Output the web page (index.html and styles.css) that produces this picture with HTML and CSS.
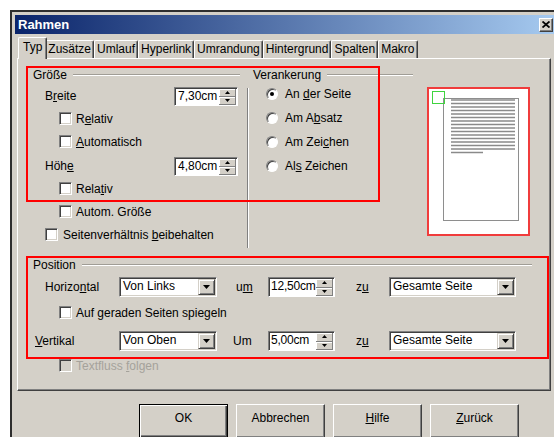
FILE: index.html
```html
<!DOCTYPE html>
<html lang="de">
<head>
<meta charset="utf-8">
<title>Rahmen</title>
<link rel="stylesheet" href="styles.css">
</head>
<body>
<div class="window">
  <div class="titlebar">
    <span class="title">Rahmen</span>
    <span class="close"><svg width="8" height="7" viewBox="0 0 8 7"><path d="M0.5 0.5L7.5 6.5M7.5 0.5L0.5 6.5" stroke="#000" stroke-width="1.8"/></svg></span>
  </div>

  <div class="tabs">
    <span class="tab active">Typ</span>
    <span class="tab">Zusätze</span>
    <span class="tab">Umlauf</span>
    <span class="tab">Hyperlink</span>
    <span class="tab">Umrandung</span>
    <span class="tab">Hintergrund</span>
    <span class="tab">Spalten</span>
    <span class="tab">Makro</span>
  </div>

  <div class="page">
    <div class="top">
      <div class="size">
        <div class="legend"><span>Größe</span></div>
        <div class="field-row">
          <span>B<u>r</u>eite</span>
          <span class="spin"><span class="val">7,30cm</span><span class="arrows"><i><svg width="5" height="3"><path d="M2.5 0L5 3H0z"/></svg></i><i><svg width="5" height="3"><path d="M0 0h5L2.5 3z"/></svg></i></span></span>
        </div>
        <div class="check-row mt1"><span class="cb"></span><span>R<u>e</u>lativ</span></div>
        <div class="check-row"><span class="cb"></span><span><u>A</u>utomatisch</span></div>
        <div class="field-row mt3">
          <span>Höh<u>e</u></span>
          <span class="spin"><span class="val">4,80cm</span><span class="arrows"><i><svg width="5" height="3"><path d="M2.5 0L5 3H0z"/></svg></i><i><svg width="5" height="3"><path d="M0 0h5L2.5 3z"/></svg></i></span></span>
        </div>
        <div class="check-row mt1"><span class="cb"></span><span>Rela<u>t</u>iv</span></div>
        <div class="check-row"><span class="cb"></span><span>Autom. Größe</span></div>
        <div class="check-row outer"><span class="cb"></span><span>Seitenverhältnis <u>b</u>eibehalten</span></div>
      </div>

      <div class="sep"></div>

      <div class="anchor">
        <div class="legend"><span>Verankerung</span></div>
        <div class="radio-row"><span class="radio on"></span><span>An <u>d</u>er Seite</span></div>
        <div class="radio-row"><span class="radio"></span><span>Am A<u>b</u>satz</span></div>
        <div class="radio-row"><span class="radio"></span><span>Am Zei<u>c</u>hen</span></div>
        <div class="radio-row"><span class="radio"></span><span>Al<u>s</u> Zeichen</span></div>
      </div>

      <div class="preview">
        <svg width="99" height="145" viewBox="0 0 99 145">
          <rect x="14.5" y="9.5" width="75" height="122" fill="#fff" stroke="#8e8e8e"/>
          <path d="M22 11H86M22 14.5H86M22 18H86M22 21.5H86M22 25H86M22 28.5H86M22 32H86M22 35.5H86M22 39H86M22 42.5H86M22 46H86M22 49.5H86M22 53H86M22 56.5H86M22 60H86M22 63.5H54" stroke="#8a8a8a" stroke-width="1.6" fill="none"/>
          <rect x="3.5" y="2.5" width="12" height="12" fill="none" stroke="#3fd43f"/>
        </svg>
      </div>
    </div>

    <div class="position">
      <div class="legend"><span>Position</span></div>
      <div class="pos-row">
        <span class="lbl-h">Horizo<u>n</u>tal</span>
        <span class="select"><span class="val">Von Links</span><span class="drop"><svg width="7" height="4"><path d="M0 0h7L3.5 4z"/></svg></span></span>
        <span class="lbl-um">u<u>m</u></span>
        <span class="spin wide"><span class="val">12,50cm</span><span class="arrows"><i><svg width="5" height="3"><path d="M2.5 0L5 3H0z"/></svg></i><i><svg width="5" height="3"><path d="M0 0h5L2.5 3z"/></svg></i></span></span>
        <span class="lbl-zu">z<u>u</u></span>
        <span class="select"><span class="val">Gesamte Seite</span><span class="drop"><svg width="7" height="4"><path d="M0 0h7L3.5 4z"/></svg></span></span>
      </div>
      <div class="check-row mirror"><span class="cb"></span><span>Auf geraden Seiten spie<u>g</u>eln</span></div>
      <div class="pos-row vert">
        <span class="lbl-v"><u>V</u>ertikal</span>
        <span class="select"><span class="val">Von Oben</span><span class="drop"><svg width="7" height="4"><path d="M0 0h7L3.5 4z"/></svg></span></span>
        <span class="lbl-um2">Um</span>
        <span class="spin wide"><span class="val">5,00cm</span><span class="arrows"><i><svg width="5" height="3"><path d="M2.5 0L5 3H0z"/></svg></i><i><svg width="5" height="3"><path d="M0 0h5L2.5 3z"/></svg></i></span></span>
        <span class="lbl-zu">z<u>u</u></span>
        <span class="select"><span class="val">Gesamte Seite</span><span class="drop"><svg width="7" height="4"><path d="M0 0h7L3.5 4z"/></svg></span></span>
      </div>
      <div class="check-row disabled follow"><span class="cb"></span><span>Textfluss <u>f</u>olgen</span></div>
    </div>

    <div class="mark mark-size"></div>
    <div class="mark mark-pos"></div>
  </div>

  <div class="buttons">
    <span class="btn default">OK</span>
    <span class="btn">Abbrechen</span>
    <span class="btn"><u>H</u>ilfe</span>
    <span class="btn"><u>Z</u>urück</span>
  </div>
</div>
</body>
</html>
```

FILE: styles.css
```css
html, body {
  margin: 0;
  overflow: hidden;
}

body {
  background: #fff;
  font: 12px "Liberation Sans", Arial, sans-serif;
  color: #000;
}

u {
  text-decoration-thickness: 1px;
  text-underline-offset: 1px;
}

/* dialog frame */
.window {
  margin: 10px 0 0 10px;
  width: 541px;
  height: 440px;
  padding: 3px 0 0 3px;
  background: #d4d0c8;
  border-left: 2px solid #2e2e2e;
  border-top: 2px solid #2e2e2e;
}

.titlebar {
  height: 19px;
  display: flex;
  align-items: center;
  justify-content: space-between;
  padding: 0 3px 0 3px;
  background: linear-gradient(to right, #0a246a, #a6caf0);
}

.title {
  color: #fff;
  font-weight: bold;
  font-size: 13px;
}

.close {
  width: 14px;
  height: 14px;
  box-sizing: border-box;
  display: flex;
  align-items: center;
  justify-content: center;
  background: #d4d0c8;
  border: 1px solid;
  border-color: #fff #404040 #404040 #fff;
  box-shadow: inset -1px -1px #808080;
}

/* tab strip */
.tabs {
  display: flex;
  align-items: flex-end;
  height: 21px;
  margin: 3px 0 0 2px;
  padding-left: 3px;
}

.tab {
  height: 18px;
  line-height: 17px;
  padding: 0 2px;
  border-top: 1px solid #fff;
  border-left: 1px solid #fff;
  border-right: 1px solid #404040;
  box-shadow: inset -1px 0 #808080;
  border-radius: 2px 2px 0 0;
  box-sizing: border-box;
}

.tab.active {
  position: relative;
  z-index: 1;
  height: 22px;
  margin: 0 -2px -1px -2px;
  padding: 0 4px;
  line-height: 19px;
  background: #d4d0c8;
}

/* tab page */
.page {
  position: relative;
  box-sizing: border-box;
  width: 534px;
  height: 333px;
  margin-left: 2px;
  padding: 9px 0 0 15px;
  border-top: 1px solid #fff;
  border-left: 1px solid #fff;
  border-right: 1px solid #404040;
  border-bottom: 1px solid #404040;
  box-shadow: inset -1px -1px #808080;
}

.top {
  display: flex;
  align-items: flex-start;
}

.legend {
  display: flex;
  align-items: center;
  height: 14px;
  line-height: 14px;
}

.legend::after {
  content: "";
  flex: 1;
  margin-left: 6px;
  border-top: 1px solid #a09d96;
  border-bottom: 1px solid #fff;
}

.size {
  width: 207px;
}

.field-row {
  height: 20px;
  margin-top: 4px;
  display: flex;
  align-items: center;
  justify-content: space-between;
  padding: 0 2px 0 12px;
}

.check-row {
  height: 23px;
  display: flex;
  align-items: center;
  padding-left: 26px;
  white-space: nowrap;
}

.check-row.outer {
  padding-left: 12px;
}

.check-row.outer .cb {
  margin-right: 5px;
}

.mt1 { margin-top: 1px; }
.mt3 { margin-top: 3px; }

.cb {
  flex: none;
  width: 13px;
  height: 13px;
  box-sizing: border-box;
  margin-right: 4px;
  background: #fff;
  border: 1px solid;
  border-color: #808080 #fff #fff #808080;
  box-shadow: inset 1px 1px #404040, inset -1px -1px #d4d0c8;
}

.disabled {
  color: #a5a29b;
}

.disabled .cb {
  background: #d4d0c8;
}

.sep {
  width: 0;
  height: 160px;
  margin: 20px 0 0 7px;
  border-left: 1px solid #808080;
  border-right: 1px solid #fff;
}

.anchor {
  width: 160px;
  margin-left: 4px;
}

.radio-row {
  height: 24px;
  display: flex;
  align-items: center;
  padding-left: 13px;
  white-space: nowrap;
}

.radio {
  position: relative;
  flex: none;
  width: 12px;
  height: 12px;
  box-sizing: border-box;
  margin-right: 7px;
  border-radius: 50%;
  background: #fff;
  border: 1px solid;
  border-color: #808080 #fff #fff #808080;
  box-shadow: inset 1px 1px #404040;
}

.radio.on::after {
  content: "";
  position: absolute;
  left: 3px;
  top: 3px;
  width: 4px;
  height: 4px;
  border-radius: 50%;
  background: #000;
}

.preview {
  width: 103px;
  height: 149px;
  box-sizing: border-box;
  margin: 19px 0 0 14px;
  border: 2px solid #f03c3c;
  background: #fff;
}

.preview svg {
  display: block;
}

/* spin field */
.spin {
  display: flex;
  width: 64px;
  height: 19px;
  box-sizing: border-box;
  background: #fff;
  border: 1px solid;
  border-color: #808080 #fff #fff #808080;
  box-shadow: inset 1px 1px #404040;
}

.spin.wide {
  width: 67px;
}

.spin .val,
.select .val {
  flex: 1;
  min-width: 0;
  padding: 1px 0 0 3px;
  line-height: 15px;
  white-space: nowrap;
}

.select .val {
  overflow: hidden;
}

.spin.wide .val {
  padding-left: 2px;
  letter-spacing: -0.2px;
}

.arrows {
  flex: none;
  width: 17px;
  display: flex;
  flex-direction: column;
  margin: 1px 1px 0 0;
}

.arrows i {
  flex: 1;
  display: flex;
  align-items: center;
  justify-content: center;
  background: #d4d0c8;
  border-right: 1px solid #808080;
  border-bottom: 1px solid #808080;
  box-shadow: inset 1px 1px #fff;
}

.arrows svg,
.drop svg {
  display: block;
  fill: #000;
}

/* drop-down list */
.select {
  display: flex;
  height: 20px;
  box-sizing: border-box;
  background: #fff;
  border: 1px solid;
  border-color: #808080 #fff #fff #808080;
  box-shadow: inset 1px 1px #404040, inset -1px -1px #d4d0c8;
}

.drop {
  flex: none;
  width: 17px;
  margin: 1px 1px 1px 0;
  display: flex;
  align-items: center;
  justify-content: center;
  box-sizing: border-box;
  background: #d4d0c8;
  border: 1px solid;
  border-color: #d4d0c8 #404040 #404040 #d4d0c8;
  box-shadow: inset 1px 1px #fff, inset -1px -1px #808080;
}

.position {
  width: 499px;
  margin-top: 10px;
}

.pos-row {
  display: grid;
  grid-template-columns: 86px 98px 51px 67px 54px 127px;
  align-items: center;
  height: 20px;
  margin-top: 5px;
}

.pos-row .spin {
  height: 20px;
}

.pos-row.vert {
  margin-top: 7px;
}

.lbl-h { padding-left: 12px; }
.lbl-v { padding-left: 2px; }
.lbl-um { padding-left: 19px; }
.lbl-um2 { padding-left: 16px; }
.lbl-zu { padding-left: 21px; }

.check-row.mirror {
  margin-top: 4px;
}

.check-row.follow {
  margin-top: 3px;
}

/* red highlight frames drawn over the page */
.mark {
  position: absolute;
  border: 2px solid #ff0000;
  box-sizing: border-box;
  pointer-events: none;
}

.mark-size {
  left: 8px;
  top: 7px;
  width: 354px;
  height: 136px;
}

.mark-pos {
  left: 8px;
  top: 197px;
  width: 523px;
  height: 103px;
}

/* button row */
.buttons {
  display: flex;
  gap: 8px;
  margin: 13px 0 0 124px;
}

.btn {
  width: 89px;
  height: 34px;
  box-sizing: border-box;
  padding-top: 6px;
  line-height: 14px;
  text-align: center;
  background: #d4d0c8;
  border: 1px solid;
  border-color: #fff #404040 #404040 #fff;
  box-shadow: inset -1px -1px #808080;
}

.btn.default {
  border-color: #000;
  box-shadow: inset 1px 1px #fff, inset -1px -1px #404040, inset -2px -2px #808080;
}
```
